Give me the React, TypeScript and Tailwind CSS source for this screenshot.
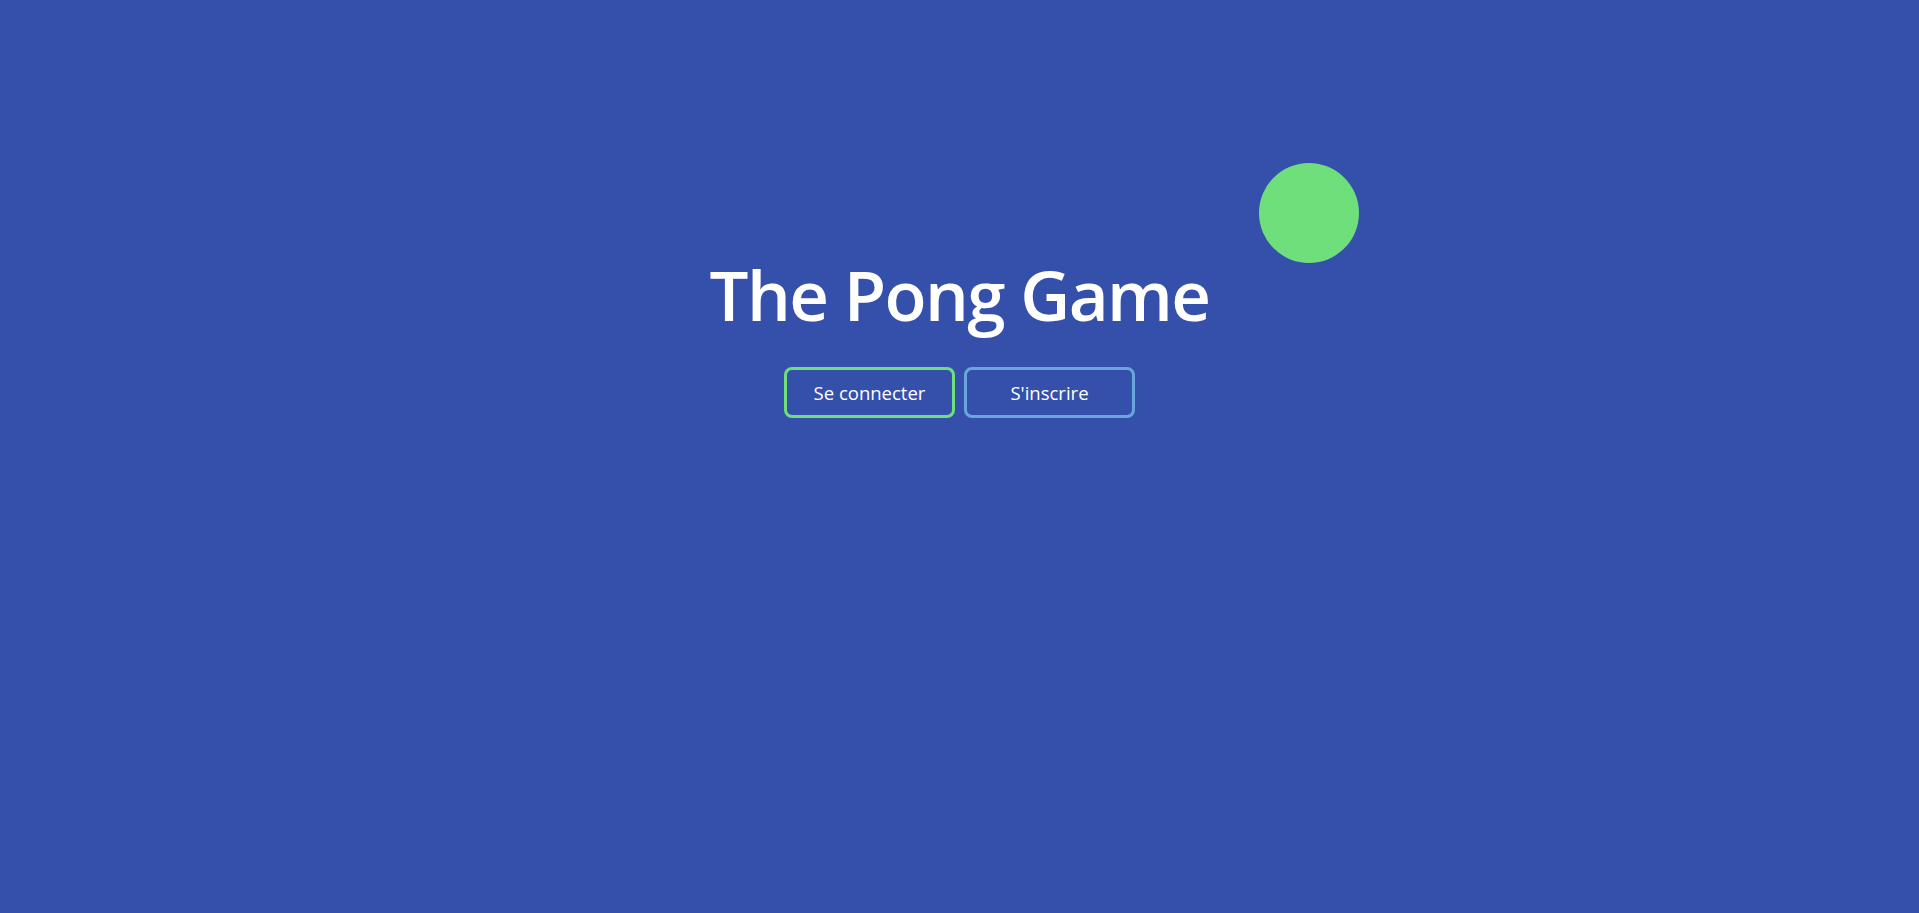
export default function App() {
  return (
    <div
      className="relative min-h-screen w-full overflow-hidden bg-[#3550aa] text-white"
      style={{ fontFamily: '"Open Sans", "Noto Sans", sans-serif' }}
    >
      {/* pong ball */}
      <div className="absolute left-[1259px] top-[163px] h-[100px] w-[100px] rounded-full bg-[#6fdf7c]" />

      <div className="flex flex-col items-center pt-[251px]">
        <h1 className="text-[69px] font-semibold leading-[86px] tracking-[-1.6px]">The Pong Game</h1>
        <div className="mt-[30px] flex gap-[9px]">
          <button className="h-[51px] w-[171px] rounded-lg border-[3px] border-[#6fdf7c] text-[18.5px] text-white">
            Se connecter
          </button>
          <button className="h-[51px] w-[171px] rounded-lg border-[3px] border-[#6aa6dc] text-[18.5px] text-white">
            S'inscrire
          </button>
        </div>
      </div>
    </div>
  );
}
